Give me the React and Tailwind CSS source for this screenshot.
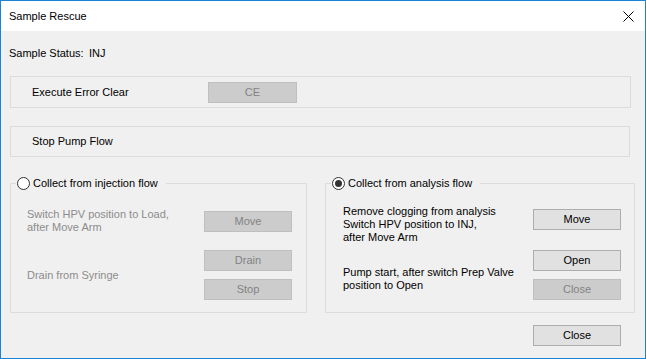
import React, { useState } from 'react';

const FONT = { fontFamily: '"Liberation Sans", Arial, sans-serif' };

// Botón estilo Windows clásico (habilitado / deshabilitado)
const WinButton = ({ children, disabled, className = '' }) => (
  <button
    type="button"
    disabled={disabled}
    className={
      'h-[21px] w-[88px] border text-[11px] leading-none ' +
      (disabled
        ? 'bg-[#cccccc] border-[#bfbfbf] text-[#838383] '
        : 'bg-[#e1e1e1] border-[#adadad] text-black ') +
      className
    }
  >
    {children}
  </button>
);

const Radio = ({ checked, onClick }) => (
  <span
    onClick={onClick}
    className="flex h-[13px] w-[13px] items-center justify-center rounded-full border border-[#333333] bg-white"
  >
    {checked && <span className="h-[7px] w-[7px] rounded-full bg-[#333333]" />}
  </span>
);

const GroupBox = ({ label, checked, onSelect, className = '', children }) => (
  <div className={'relative h-[130px] border border-[#dcdcdc] ' + className}>
    <div className="absolute left-[5px] top-[-8px] flex items-center gap-[3px] bg-[#f0f0f0] pl-[1px] pr-[8px]">
      <Radio checked={checked} onClick={onSelect} />
      <span className="text-[11px] leading-[14px] text-black">{label}</span>
    </div>
    {children}
  </div>
);

const App = () => {
  const [mode, setMode] = useState('analysis');
  const injection = mode === 'injection';

  return (
    <div
      style={FONT}
      className="flex h-[359px] w-[646px] flex-col border border-[#1883d7] bg-[#f0f0f0] text-[11px] text-black"
    >
      {/* Barra de título */}
      <div className="flex h-[30px] shrink-0 items-center justify-between bg-white pl-[8px] pr-[10px]">
        <span className="text-[11px]">Sample Rescue</span>
        <svg width="11" height="11" viewBox="0 0 11 11" className="mr-[1px]">
          <path d="M0.5 0.5 L10.5 10.5 M10.5 0.5 L0.5 10.5" stroke="#000" strokeWidth="1" />
        </svg>
      </div>

      <div className="flex flex-col pt-[16px]">
        <div className="flex h-[13px] items-center whitespace-nowrap pl-[8px] leading-[13px]">
          <span className="w-[80px] shrink-0">Sample Status:</span>
          <span>INJ</span>
        </div>

        <div className="ml-[9px] mt-[16px] flex h-[32px] w-[621px] items-center border border-[#dcdcdc] pl-[21px]">
          <span className="w-[176px]">Execute Error Clear</span>
          <WinButton disabled className="w-[89px]">CE</WinButton>
        </div>

        <div className="ml-[9px] mt-[18px] flex h-[31px] w-[620px] items-center border border-[#dcdcdc] pl-[21px]">
          <span>Stop Pump Flow</span>
        </div>

        <div className="mt-[26px] flex">
          <GroupBox
            label="Collect from injection flow"
            checked={injection}
            onSelect={() => setMode('injection')}
            className="ml-[9px] w-[297px]"
          >
            <div className="flex flex-col pl-[16px] pr-[14px] pt-[24px] text-[#8c8c8c]">
              <div className="flex items-center justify-between">
                <span className="leading-[13px]">
                  Switch HPV position to Load,
                  <br />
                  after Move Arm
                </span>
                <WinButton disabled={!injection}>Move</WinButton>
              </div>
              <div className="mt-[16px] flex items-center justify-between">
                <span className="leading-[13px]">Drain from Syringe</span>
                <div className="flex flex-col gap-[8px]">
                  <WinButton disabled={!injection}>Drain</WinButton>
                  <WinButton disabled={!injection}>Stop</WinButton>
                </div>
              </div>
            </div>
          </GroupBox>

          <GroupBox
            label="Collect from analysis flow"
            checked={!injection}
            onSelect={() => setMode('analysis')}
            className="ml-[18px] w-[310px]"
          >
            <div className="flex flex-col pl-[17px] pr-[13px] pt-[21px]">
              <div className="flex items-start justify-between">
                <span className="leading-[13px]">
                  Remove clogging from analysis
                  <br />
                  Switch HPV position to INJ,
                  <br />
                  after Move Arm
                </span>
                <WinButton disabled={injection} className="mt-[4px]">Move</WinButton>
              </div>
              <div className="mt-[6px] flex items-start justify-between">
                <span className="mt-[16px] leading-[13px]">
                  Pump start, after switch Prep Valve
                  <br />
                  position to Open
                </span>
                <div className="flex flex-col gap-[8px]">
                  <WinButton disabled={injection}>Open</WinButton>
                  <WinButton disabled>Close</WinButton>
                </div>
              </div>
            </div>
          </GroupBox>
        </div>

        <div className="ml-[532px] mt-[12px]">
          <WinButton>Close</WinButton>
        </div>
      </div>
    </div>
  );
};

export default App;
